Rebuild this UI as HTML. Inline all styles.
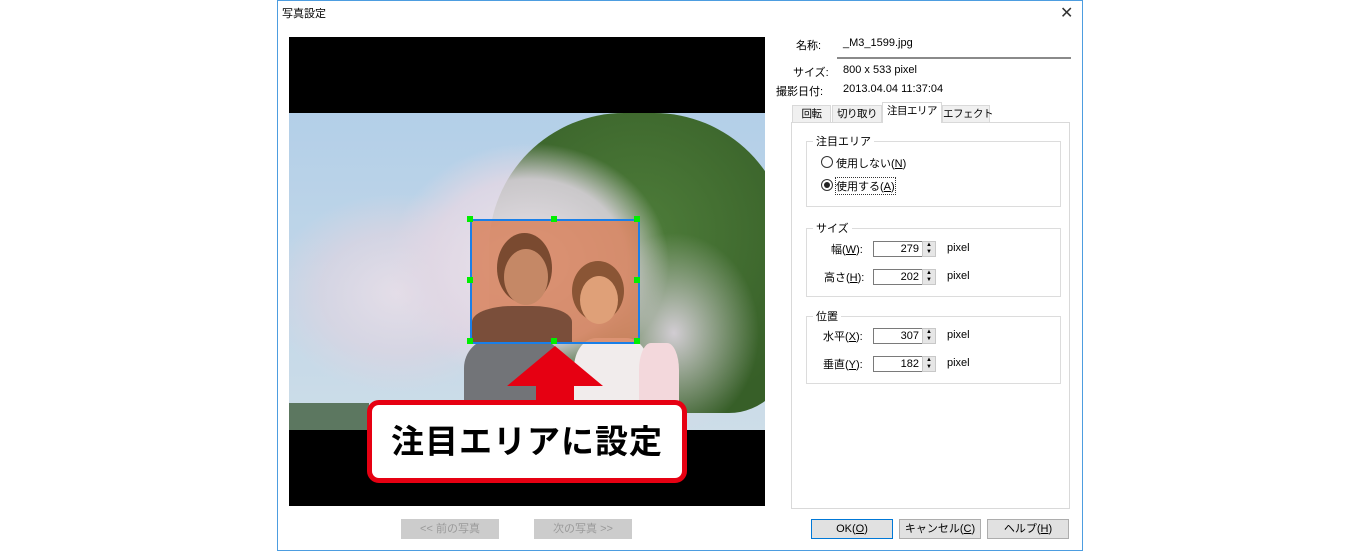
<!DOCTYPE html><html><head><meta charset="utf-8"><style>
body{margin:0;width:1360px;height:551px;background:#fff;position:relative;overflow:hidden;font-family:"Liberation Sans","Noto Sans CJK JP",sans-serif;font-size:11px;color:#000}
.a{position:absolute}
.btn{position:absolute;background:#e1e1e1;border:1px solid #adadad;text-align:center;line-height:18px;font-size:11px}
.grp{position:absolute;border:1px solid #dcdcdc}
.gl{position:absolute;background:#fff;padding:0 3px;top:-9px;left:6px}
.spin{position:absolute;height:16px;border:1px solid #7a7a7a;background:#fff;text-align:right;line-height:15px;padding-right:3px;box-sizing:border-box;width:50px}
.sb{position:absolute;width:14px;height:16px;background:#e6e6e6;border:1px solid #c8c8c8;box-sizing:border-box;font-size:6px;line-height:7px;text-align:center}
.tab{position:absolute;top:105px;height:17px;border:1px solid #d9d9d9;border-bottom:none;background:#f0f0f0;line-height:16px;text-align:center;box-sizing:border-box;font-size:10.5px;letter-spacing:-0.5px;white-space:nowrap}
.b{position:absolute;border-radius:50%}
</style></head><body>
<div class="a" style="left:277px;top:0;width:804px;height:549px;border:1px solid #4d9de0"></div>
<div class="a" style="left:282px;top:5px;font-size:11px">写真設定</div>
<div class="a" style="left:1060px;top:3px;font-size:16px;color:#333">✕</div>
<div class="a" style="left:289px;top:37px;width:476px;height:469px;background:#000"></div>
<div class="a" style="left:289px;top:113px;width:476px;height:317px;overflow:hidden;background:linear-gradient(180deg,#b3cfe8,#cddde8)">
 <div class="b" style="left:200px;top:0px;width:300px;height:300px;border-radius:45% 45% 20% 20%;background:radial-gradient(circle at 50% 40%,#4e7d3a,#375f28 80%)"></div>
 <div class="b" style="left:-20px;top:80px;width:260px;height:200px;background:radial-gradient(closest-side,rgba(230,222,232,.95),rgba(220,212,225,.7) 60%,rgba(200,210,225,0))"></div>
 <div class="b" style="left:100px;top:30px;width:280px;height:240px;background:radial-gradient(closest-side,rgba(235,228,236,1),rgba(225,215,228,.85) 70%,rgba(215,210,225,0))"></div>
 <div class="b" style="left:300px;top:120px;width:170px;height:200px;background:radial-gradient(closest-side,rgba(225,215,228,.9),rgba(215,210,225,0))"></div>
 <div class="a" style="left:175px;top:225px;width:100px;height:100px;border-radius:30% 30% 0 0;background:#727478"></div>
 <div class="a" style="left:285px;top:225px;width:75px;height:100px;border-radius:30% 30% 0 0;background:#f1ecec"></div>
 <div class="a" style="left:350px;top:230px;width:40px;height:90px;border-radius:30% 30% 0 0;background:#f3d8dc"></div>
 <div class="a" style="left:0;top:290px;width:80px;height:30px;background:#5c7760"></div>
</div>
<div class="a" style="left:470px;top:219px;width:166px;height:121px;border:2px solid #1a7fe8;background:rgba(215,125,85,.8);overflow:hidden">
 <div class="b" style="left:25px;top:12px;width:55px;height:70px;background:#7a4a30"></div>
 <div class="b" style="left:32px;top:28px;width:44px;height:56px;background:#c58866"></div>
 <div class="b" style="left:100px;top:40px;width:52px;height:60px;background:#8a5535"></div>
 <div class="b" style="left:108px;top:55px;width:38px;height:48px;background:#dfa078"></div>
 <div class="a" style="left:0;top:85px;width:100px;height:40px;background:#7a4e3a;border-radius:40% 40% 0 0"></div>
</div>
<div class="a" style="left:467px;top:216px;width:6px;height:6px;background:#0e0"></div>
<div class="a" style="left:551px;top:216px;width:6px;height:6px;background:#0e0"></div>
<div class="a" style="left:634px;top:216px;width:6px;height:6px;background:#0e0"></div>
<div class="a" style="left:467px;top:277px;width:6px;height:6px;background:#0e0"></div>
<div class="a" style="left:634px;top:277px;width:6px;height:6px;background:#0e0"></div>
<div class="a" style="left:467px;top:338px;width:6px;height:6px;background:#0e0"></div>
<div class="a" style="left:551px;top:338px;width:6px;height:6px;background:#0e0"></div>
<div class="a" style="left:634px;top:338px;width:6px;height:6px;background:#0e0"></div>
<svg class="a" style="left:500px;top:340px" width="110" height="70"><polygon points="55,6 103,46 74,46 74,65 36,65 36,46 7,46" fill="#e60012"/></svg>
<div class="a" style="left:367px;top:400px;width:310px;height:73px;border:5px solid #e60012;border-radius:12px;background:#fff;font-size:33px;font-weight:bold;line-height:73px;text-align:center;letter-spacing:1px">注目エリアに設定</div>
<div class="btn" style="left:401px;top:519px;width:96px;color:#9a9a9a;background:#ccc;border-color:#ccc">&lt;&lt; 前の写真</div>
<div class="btn" style="left:534px;top:519px;width:96px;color:#9a9a9a;background:#ccc;border-color:#ccc">次の写真 &gt;&gt;</div>
<div class="a" style="left:796px;top:37px">名称:</div>
<div class="a" style="left:843px;top:37px">_M3_1599.jpg</div>
<div class="a" style="left:837px;top:57px;width:234px;height:2px;background:#8a8a8a"></div>
<div class="a" style="left:793px;top:64px">サイズ:</div>
<div class="a" style="left:843px;top:64px">800 x 533 pixel</div>
<div class="a" style="left:776px;top:83px">撮影日付:</div>
<div class="a" style="left:843px;top:83px">2013.04.04 11:37:04</div>
<div class="tab" style="left:792px;width:39px">回転</div>
<div class="tab" style="left:832px;width:50px">切り取り</div>
<div class="tab" style="left:882px;width:60px;top:102px;height:21px;background:#fff;z-index:2">注目エリア</div>
<div class="tab" style="left:942px;width:48px">エフェクト</div>
<div class="a" style="left:791px;top:122px;width:277px;height:385px;border:1px solid #d9d9d9;background:#fff"></div>
<div class="grp" style="left:806px;top:141px;width:253px;height:64px"><span class="gl">注目エリア</span></div>
<div class="a" style="left:821px;top:156px;width:10px;height:10px;border:1px solid #333;border-radius:50%"></div>
<div class="a" style="left:836px;top:155px">使用しない(<u>N</u>)</div>
<div class="a" style="left:821px;top:179px;width:10px;height:10px;border:1px solid #333;border-radius:50%"><div class="a" style="left:2px;top:2px;width:6px;height:6px;border-radius:50%;background:#222"></div></div>
<div class="a" style="left:836px;top:178px;outline:1px dotted #333">使用する(<u>A</u>)</div>
<div class="grp" style="left:806px;top:228px;width:253px;height:67px"><span class="gl">サイズ</span></div>
<div class="grp" style="left:806px;top:316px;width:253px;height:66px"><span class="gl">位置</span></div>
<div class="a" style="left:831px;top:241px">幅(<u>W</u>):</div>
<div class="a" style="left:824px;top:269px">高さ(<u>H</u>):</div>
<div class="a" style="left:823px;top:328px">水平(<u>X</u>):</div>
<div class="a" style="left:823px;top:356px">垂直(<u>Y</u>):</div>
<div class="spin" style="left:873px;top:241px">279</div><div class="sb" style="left:922px;top:241px">▲<br>▼</div>
<div class="spin" style="left:873px;top:269px">202</div><div class="sb" style="left:922px;top:269px">▲<br>▼</div>
<div class="spin" style="left:873px;top:328px">307</div><div class="sb" style="left:922px;top:328px">▲<br>▼</div>
<div class="spin" style="left:873px;top:356px">182</div><div class="sb" style="left:922px;top:356px">▲<br>▼</div>
<div class="a" style="left:947px;top:242px">pixel</div>
<div class="a" style="left:947px;top:270px">pixel</div>
<div class="a" style="left:947px;top:329px">pixel</div>
<div class="a" style="left:947px;top:357px">pixel</div>
<div class="btn" style="left:811px;top:519px;width:80px;border:1px solid #0078d7">OK(<u>O</u>)</div>
<div class="btn" style="left:899px;top:519px;width:80px">キャンセル(<u>C</u>)</div>
<div class="btn" style="left:987px;top:519px;width:80px">ヘルプ(<u>H</u>)</div>
</body></html>
